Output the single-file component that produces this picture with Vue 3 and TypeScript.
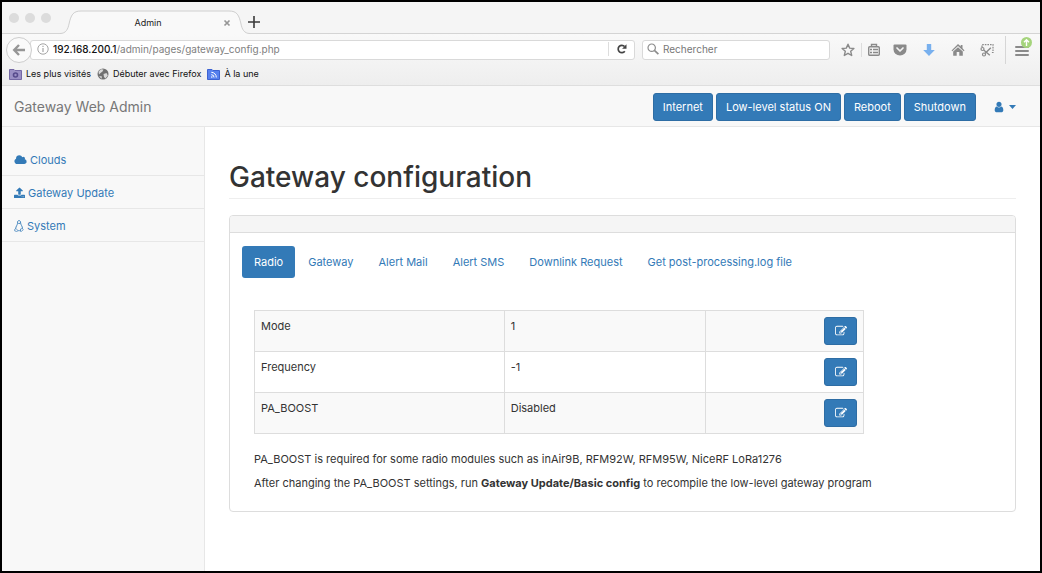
<script setup lang="ts">
import { ref } from 'vue'

interface Setting {
  name: string
  value: string
}

const actions: string[] = ['Internet', 'Low-level status ON', 'Reboot', 'Shutdown']

const tabs: string[] = [
  'Radio',
  'Gateway',
  'Alert Mail',
  'Alert SMS',
  'Downlink Request',
  'Get post-processing.log file',
]
const activeTab = ref<string>('Radio')

const settings: Setting[] = [
  { name: 'Mode', value: '1' },
  { name: 'Frequency', value: '-1' },
  { name: 'PA_BOOST', value: 'Disabled' },
]

const path = ref<string>('/admin/pages/gateway_config.php')
const query = ref<string>('')
</script>

<template>
  <div class="window">
    <header class="chrome">
      <div class="tab-strip">
        <div class="lights"><i></i><i></i><i></i></div>
        <div class="browser-tab">
          <svg class="tab-shape" viewBox="0 0 190 24" width="190" height="24" aria-hidden="true">
            <path d="M0 24V23.500C6 23.500 8 19 9 14C11 5 13 1 21 1H169C177 1 179 5 181 14C182 19 184 23.500 190 23.500V24Z" fill="#f9f9f9" />
            <path d="M0 23.500C6 23.500 8 19 9 14C11 5 13 1 21 1H169C177 1 179 5 181 14C182 19 184 23.500 190 23.500" fill="none" stroke="#cfcfcf" />
          </svg>
          <span class="tab-title">Admin</span>
          <button class="bare tab-close" type="button" aria-label="Close tab">
            <svg viewBox="0 0 8 8" width="8" height="8"><path d="M1.500 1.500L6.500 6.500M6.500 1.500L1.500 6.500" stroke="#969696" stroke-width="1.700" /></svg>
          </button>
        </div>
        <button class="bare new-tab" type="button" aria-label="New tab">
          <svg viewBox="0 0 12 12" width="12" height="12"><path d="M6 0V12M0 6H12" stroke="#3a3a3a" stroke-width="1.600" /></svg>
        </button>
      </div>

      <div class="toolbar">
        <button class="bare back" type="button" aria-label="Back">
          <svg viewBox="0 0 14 14" width="14" height="14"><path d="M7 2L2.200 7L7 12M2.500 7H13" fill="none" stroke="#969696" stroke-width="2.400" /></svg>
        </button>
        <div class="address">
          <svg class="info" viewBox="0 0 12 12" width="12" height="12" aria-hidden="true">
            <circle cx="6" cy="6" r="5.200" fill="none" stroke="#a5a5a5" />
            <path d="M6 5V9M6 2.800V4" stroke="#a5a5a5" stroke-width="1.200" />
          </svg>
          <label class="host" for="address">192.168.200.1</label>
          <input id="address" v-model="path" class="path" type="text" spellcheck="false" />
          <button class="bare reload" type="button" aria-label="Reload">
            <svg viewBox="0 0 10 10" width="10" height="10">
              <path d="M7.800 7.300A3.700 3.700 0 1 1 7.600 2.500" fill="none" stroke="#444" stroke-width="1.700" />
              <path d="M9.500 0.300V4.700H5.100Z" fill="#444" />
            </svg>
          </button>
        </div>
        <div class="search">
          <svg viewBox="0 0 12 12" width="12" height="12" aria-hidden="true">
            <circle cx="4.700" cy="4.700" r="3.700" fill="none" stroke="#8d8d8d" stroke-width="1.200" />
            <path d="M7.400 7.400L11.400 11.200" stroke="#8d8d8d" stroke-width="1.700" />
          </svg>
          <input v-model="query" type="search" placeholder="Rechercher" aria-label="Rechercher" />
        </div>
        <button class="bare tool star" type="button" aria-label="Bookmark this page">
          <svg viewBox="0 0 14 14" width="14" height="14"><path d="M7 1.200L8.700 5.100L12.900 5.500L9.700 8.300L10.700 12.500L7 10.300L3.300 12.500L4.300 8.300L1.100 5.500L5.300 5.100Z" fill="none" stroke="#8a8a8a" stroke-width="1.400" stroke-linejoin="round" /></svg>
        </button>
        <button class="bare tool list" type="button" aria-label="Bookmarks">
          <svg viewBox="0 0 14 14" width="14" height="14">
            <rect x="1.700" y="3.700" width="10.600" height="8.600" rx="1" fill="none" stroke="#8a8a8a" stroke-width="1.400" />
            <path d="M4.500 3.500V1.500H9.500V3.500M3 6.500H5M6 6.500H11M3 9.500H5M6 9.500H11" fill="none" stroke="#8a8a8a" stroke-width="1.400" />
          </svg>
        </button>
        <button class="bare tool" type="button" aria-label="Pocket">
          <svg viewBox="0 0 14 14" width="14" height="14">
            <path d="M1.500 1.500H12.500Q13.500 1.500 13.500 2.500V6.500A6.500 6 0 0 1 0.500 6.500V2.500Q0.500 1.500 1.500 1.500Z" fill="#8a8a8a" />
            <path d="M4 5L7 8L10 5" fill="none" stroke="#f4f4f4" stroke-width="1.700" stroke-linecap="round" stroke-linejoin="round" />
          </svg>
        </button>
        <button class="bare tool" type="button" aria-label="Downloads">
          <svg viewBox="0 0 14 14" width="14" height="14"><path d="M4.800 1H9.200V7H12.800L7 13L1.200 7H4.800Z" fill="#78b0ee" /></svg>
        </button>
        <button class="bare tool" type="button" aria-label="Home">
          <svg viewBox="0 0 14 14" width="14" height="14">
            <path d="M7 1L9.700 3.600V2H11.500V5.300L13.500 7.400L12.700 8.200L7 2.900L1.300 8.200L0.500 7.400Z" fill="#8a8a8a" />
            <path d="M7 4.200L11.800 8.600V12.800H8.300V9H5.700V12.800H2.200V8.600Z" fill="#8a8a8a" />
          </svg>
        </button>
        <button class="bare tool" type="button" aria-label="Screenshot">
          <svg viewBox="0 0 14 14" width="14" height="14" fill="none" stroke="#8a8a8a">
            <path d="M2 4V1.600H13V9.500H11" stroke-width="1.200" stroke-dasharray="1.600 1" />
            <circle cx="2.500" cy="6" r="1.500" stroke-width="1.200" />
            <circle cx="4" cy="11.500" r="1.500" stroke-width="1.200" />
            <path d="M3.700 7L9.800 12.300M5 10.500L10.800 4.700" stroke-width="1.400" />
          </svg>
        </button>
        <button class="bare tool menu" type="button" aria-label="Menu">
          <svg viewBox="0 0 18 20" width="18" height="20">
            <path d="M2 10H14M2 14H14M2 18H14" stroke="#8a8a8a" stroke-width="2" stroke-linecap="round" />
            <circle cx="12.500" cy="5.500" r="5.500" fill="#a5d47c" />
            <path d="M12.500 9V3M10 5.300L12.500 2.800L15 5.300" fill="none" stroke="#fff" stroke-width="1.400" />
          </svg>
        </button>
      </div>

      <nav class="bookmarks" aria-label="Bookmarks">
        <a href="#">
          <svg viewBox="0 0 13 12" width="13" height="12">
            <path d="M0.500 1.500H5L6 2.500H12.500V11.500H0.500Z" fill="#9a8fc4" stroke="#7468a4" />
            <circle cx="6.500" cy="7" r="2" fill="none" stroke="#574b8c" stroke-width="1.600" />
          </svg>
          Les plus visités
        </a>
        <a href="#">
          <svg viewBox="0 0 12 12" width="12" height="12">
            <circle cx="6" cy="6" r="5.500" fill="#707070" />
            <path d="M1.500 3.500L4 1.200L6.500 1.500L5.500 3.500L3.500 5L2 6.500ZM6.500 6L9.500 5L10.800 7.500L8.500 10.500L7 9ZM2 8.500L4.500 8L5 10.700Z" fill="#d9d9d9" />
          </svg>
          Débuter avec Firefox
        </a>
        <a href="#">
          <svg viewBox="0 0 13 12" width="13" height="12">
            <path d="M0.500 1.500H5L6 2.500H12.500V11.500H0.500Z" fill="#5680ee" stroke="#3c62d2" />
            <path d="M4.300 4.300A5 5 0 0 1 9.300 9.500M4.300 6.700A2.700 2.700 0 0 1 7 9.500" fill="none" stroke="#fff" />
            <circle cx="4.800" cy="9" r="0.800" fill="#fff" />
          </svg>
          À la une
        </a>
      </nav>
    </header>

    <div class="navbar">
      <a class="brand" href="#">Gateway Web Admin</a>
      <div class="actions">
        <button v-for="action in actions" :key="action" class="btn" type="button">{{ action }}</button>
      </div>
      <button class="bare account" type="button" aria-label="Account">
        <svg viewBox="0 0 1792 1792" width="12" height="12" fill="currentColor"><path d="M1536 1399q0 109-62.500 187t-150.500 78h-854q-88 0-150.500-78t-62.500-187q0-85 8.500-160.500t31.500-152 58.500-131 94-89 134.500-34.500q131 128 313 128t313-128q76 0 134.500 34.500t94 89 58.500 131 31.500 152 8.500 160.500zm-256-887q0 159-112.500 271.500t-271.500 112.500-271.500-112.500-112.500-271.500 112.500-271.500 271.500-112.500 271.500 112.500 112.500 271.500z" /></svg>
        <svg viewBox="0 0 7 4" width="7" height="4" fill="currentColor"><path d="M0 0H7L3.500 4Z" /></svg>
      </button>
    </div>

    <div class="body">
      <nav class="sidebar" aria-label="Sections">
        <a href="#">
          <svg viewBox="0 0 2048 1792" width="13" height="12" fill="currentColor"><path d="M1984 1152q0 159-112.500 271.500t-271.500 112.500h-1088q-185 0-316.500-131.500t-131.500-316.500q0-132 71-241.500t187-163.500q-2-28-2-43 0-212 150-362t362-150q158 0 286.500 88t187.500 230q70-62 166-62 106 0 181 75t75 181q0 75-41 138 129 30 213 134.500t84 239.500z" /></svg>
          Clouds
        </a>
        <a href="#">
          <svg viewBox="64 0 1664 1792" width="11" height="12" fill="currentColor"><path d="M1344 1472q0-26-19-45t-45-19-45 19-19 45 19 45 45 19 45-19 19-45zm256 0q0-26-19-45t-45-19-45 19-19 45 19 45 45 19 45-19 19-45zm128-224v320q0 40-28 68t-68 28h-1472q-40 0-68-28t-28-68v-320q0-40 28-68t68-28h427q21 56 70.500 92t110.500 36h256q61 0 110.500-36t70.500-92h427q40 0 68 28t28 68zm-325-648q-17 40-59 40h-256v448q0 26-19 45t-45 19h-256q-26 0-45-19t-19-45v-448h-256q-42 0-59-40-17-39 14-69l448-448q18-19 45-19t45 19l448 448q31 30 14 69z" /></svg>
          Gateway Update
        </a>
        <a href="#">
          <svg viewBox="0 0 10 12" width="10" height="12" fill="none" stroke="currentColor">
            <path d="M3.500 3.300C3.400 1.500 3.800 0.600 5 0.600S6.600 1.500 6.600 3C6.700 4.800 8.500 6.200 8.500 8.600M3.500 3.300C3.500 5 1.800 6.200 1.700 8.600" stroke-width="0.900" />
            <path d="M0.700 9.300L2 8.500L4 10.700L2.800 11.500L0.700 10.900ZM9.300 9.500L8.200 8.500L6.500 9V11.300L7.500 11.400ZM4 10.700H6.500" stroke-width="0.700" />
            <path d="M4.200 3.200L5 3.700L6 3.100" stroke-width="0.900" />
          </svg>
          System
        </a>
      </nav>

      <main class="content">
        <h1>Gateway configuration</h1>
        <section class="panel">
          <div class="panel-heading"></div>
          <div class="panel-body">
            <div class="pills" role="tablist">
              <button
                v-for="tab in tabs"
                :key="tab"
                class="pill"
                :class="{ active: tab === activeTab }"
                type="button"
                role="tab"
                :aria-selected="tab === activeTab"
                @click="activeTab = tab"
              >{{ tab }}</button>
            </div>
            <div class="tab-content">
              <table>
                <colgroup><col class="c-name" /><col class="c-value" /><col /></colgroup>
                <tbody>
                  <tr v-for="setting in settings" :key="setting.name">
                    <td>{{ setting.name }}</td>
                    <td>{{ setting.value }}</td>
                    <td class="edit-cell">
                      <button class="btn edit" type="button" :aria-label="`Edit ${setting.name}`">
                        <svg viewBox="0 0 1792 1792" width="12" height="12" fill="currentColor"><path d="M888 1184l116-116-152-152-116 116v56h96v96h56zm440-720q-16-16-33 1l-350 350q-17 17-1 33t33-1l350-350q17-17 1-33zm80 594v190q0 119-84.500 203.500t-203.500 84.500h-832q-119 0-203.500-84.500t-84.500-203.500v-832q0-119 84.500-203.500t203.500-84.500h832q63 0 117 25 15 7 18 23 3 17-9 29l-49 49q-14 14-32 8-23-6-45-6h-832q-66 0-113 47t-47 113v832q0 66 47 113t113 47h832q66 0 113-47t47-113v-126q0-13 9-22l64-64q15-15 35-7t20 29zm-96-738l288 288-672 672h-288v-288zm444 132l-92 92-288-288 92-92q28-28 68-28t68 28l152 152q28 28 28 68t-28 68z" /></svg>
                      </button>
                    </td>
                  </tr>
                </tbody>
              </table>
              <p>PA_BOOST is required for some radio modules such as inAir9B, RFM92W, RFM95W, NiceRF LoRa1276</p>
              <p>After changing the PA_BOOST settings, run <strong>Gateway Update/Basic config</strong> to recompile the low-level gateway program</p>
            </div>
          </div>
        </section>
      </main>
    </div>
  </div>
</template>

<style>
body {
  margin: 0;
}
</style>

<style scoped>
.window {
  box-sizing: border-box;
  min-height: 100vh;
  display: flex;
  flex-direction: column;
  border: 2px solid #000;
  background: #fff;
  color: #333;
  font: 11px/16px Inter, "Liberation Sans", Arial, sans-serif;
}
.window *,
.window *::before {
  box-sizing: border-box;
}
svg {
  display: block;
  flex: none;
}
a {
  text-decoration: none;
}
button,
input {
  font: inherit;
  color: inherit;
}
.bare {
  display: flex;
  align-items: center;
  justify-content: center;
  padding: 0;
  border: 0;
  background: none;
}

/* Browser chrome */
.chrome {
  font-size: 9px;
  line-height: 14px;
  color: #222;
  border-bottom: 1px solid #dedede;
  background: linear-gradient(#f9f9f9 32px, #eee);
}
.tab-strip {
  height: 32px;
  display: flex;
  align-items: flex-end;
  background: #f5f5f5;
  border-bottom: 1px solid #d4d4d4;
}
.lights {
  display: flex;
  gap: 6px;
  width: 58px;
  padding: 0 0 10px 7px;
}
.lights i {
  width: 10px;
  height: 10px;
  border-radius: 50%;
  background: #dcdcdc;
}
.browser-tab {
  position: relative;
  width: 188px;
  height: 24px;
  margin-bottom: -1px;
  display: flex;
  align-items: center;
  padding: 1px 17px 0 13px;
}
.tab-shape {
  position: absolute;
  inset: 0;
}
.tab-title {
  position: relative;
  flex: 1;
  text-align: center;
}
.tab-close {
  position: relative;
}
.new-tab {
  height: 22px;
  width: 12px;
}
.toolbar {
  height: 31px;
  display: flex;
  align-items: center;
  font-size: 10px;
}
.back {
  position: relative;
  width: 26px;
  height: 26px;
  margin-left: 4px;
  border: 1px solid #cdcdcd;
  border-radius: 50%;
  background: #fafafa;
}
.address,
.search {
  display: flex;
  align-items: center;
  height: 20px;
  padding-bottom: 1px;
  border: 1px solid #d9d9d9;
  border-radius: 3px;
  background: #fff;
}
.address {
  flex: 1;
  min-width: 0;
  margin-left: -2px;
  padding-left: 6px;
}
.host {
  margin-left: 4px;
  color: #111;
  font-weight: 500;
}
.path {
  flex: 1;
  min-width: 0;
  padding: 0;
  border: 0;
  outline: 0;
  background: none;
  color: #808080;
}
.reload {
  width: 26px;
  height: 14px;
  border-left: 1px solid #ddd;
}
.search {
  width: 188px;
  margin-left: 7px;
  padding-left: 4px;
  gap: 4px;
}
.search input {
  flex: 1;
  min-width: 0;
  padding: 0;
  border: 0;
  outline: 0;
  background: none;
}
.search input::placeholder {
  color: #777;
  opacity: 1;
}
.tool {
  width: 29px;
  height: 14px;
}
.star {
  width: 26px;
  margin-left: 5px;
}
.list {
  width: 24px;
  border-left: 1px solid #ddd;
}
.menu {
  width: 35px;
  height: 28px;
  margin-left: 4px;
  padding-bottom: 6px;
  border-left: 1px solid #d6d6d6;
}
.bookmarks {
  height: 20px;
  display: flex;
  gap: 6px;
  padding: 1px 0 3px 7px;
}
.bookmarks a {
  display: flex;
  align-items: center;
  gap: 4px;
  color: #111;
}

/* Site header */
.navbar {
  display: flex;
  align-items: center;
  height: 41px;
  padding: 2px 24px 0 12px;
  border-bottom: 1px solid #e7e7e7;
  background: #f8f8f8;
}
.brand {
  flex: 1;
  color: #777;
  font-size: 14px;
}
.actions {
  display: flex;
  gap: 3px;
}
.btn {
  height: 28px;
  padding: 0 9px;
  border: 1px solid #2e6da4;
  border-radius: 3px;
  background: #337ab7;
  color: #fff;
}
.account {
  margin-left: 17px;
  gap: 4px;
  color: #337ab7;
}

/* Page */
.body {
  flex: 1;
  display: flex;
}
.sidebar {
  width: 203px;
  flex: none;
  padding-top: 16px;
  border-right: 1px solid #e7e7e7;
  background: #f8f8f8;
}
.sidebar a {
  display: flex;
  align-items: center;
  gap: 3px;
  height: 33px;
  padding: 2px 12px 0;
  border-bottom: 1px solid #e7e7e7;
  color: #337ab7;
}
.content {
  flex: 1;
  min-width: 0;
  padding: 34px 24px 24px;
}
h1 {
  margin: 0 0 16px;
  padding-bottom: 5px;
  border-bottom: 1px solid #eee;
  font-size: 28px;
  line-height: 32px;
  font-weight: 500;
}
.panel {
  border: 1px solid #ddd;
  border-radius: 4px;
}
.panel-heading {
  height: 17px;
  border-bottom: 1px solid #ddd;
  border-radius: 3px 3px 0 0;
  background: #f5f5f5;
}
.panel-body {
  padding: 13px 12px 12px;
}
.pills {
  display: flex;
  flex-wrap: wrap;
  gap: 1px;
}
.pill {
  height: 32px;
  padding: 0 12px;
  border: 0;
  border-radius: 3px;
  background: none;
  color: #337ab7;
}
.pill.active {
  background: #337ab7;
  color: #fff;
}
.tab-content {
  padding: 32px 12px 0;
}
table {
  width: 100%;
  max-width: 610px;
  margin-bottom: 17px;
  table-layout: fixed;
  border-collapse: collapse;
}
.c-name {
  width: 41%;
}
.c-value {
  width: 33%;
}
td {
  height: 41px;
  padding: 7px 6px;
  border: 1px solid #ddd;
  vertical-align: top;
}
tr:nth-child(odd) {
  background: #f9f9f9;
}
.edit-cell {
  padding: 6px;
}
.edit {
  display: flex;
  align-items: center;
  justify-content: center;
  width: 33px;
  margin-left: auto;
}
p {
  margin: 0 0 8px;
}
</style>
